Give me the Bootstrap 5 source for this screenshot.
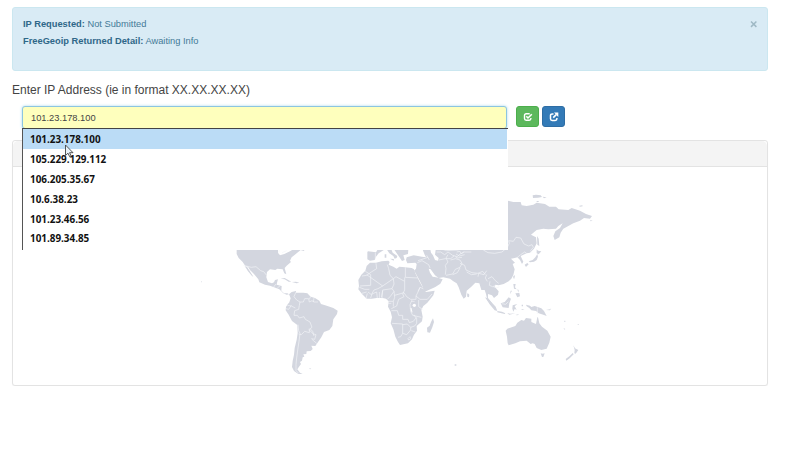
<!DOCTYPE html>
<html lang="en">
<head>
<meta charset="utf-8">
<title>IP Lookup</title>
<link href="https://cdn.jsdelivr.net/npm/bootstrap@5.3.0/dist/css/bootstrap.min.css" rel="stylesheet">
<style>
body{font-family:"Liberation Sans",Arial,sans-serif;font-size:9.3px;line-height:17px;color:#444;background:#fff;overflow:hidden}
.page{width:756px;margin:7px 0 0 12px}
.info-box{height:64px;padding:8px 10px;background:#d9ebf5;border-color:#cbe7f0;border-radius:3px;color:#447a97;margin:0}
.info-box strong{color:#2f6788}
.dismiss{color:#9fb9c5;width:9px;height:17px;margin-right:-2px}
.prompt-label{font-size:12px;line-height:16px;margin:11px 0 8px}
.entry{height:23px;padding:0 8px;font-size:9.3px;background:#feffbd;border-color:#8cc5e0;border-radius:3px;color:#444;box-shadow:0 0 3px #a9d6ec}
.entry:focus{background:#feffbd}
.field{width:485px;margin-left:10px}
.act{width:23px;height:21px;padding:0;border-radius:3px}
.act-ok{background:#5cb85c;border-color:#4cae4c;margin-left:9px}
.act-go{background:#337ab7;border-color:#2e6da4;margin-left:3px}
.suggest{left:0;top:22px;width:486px;height:122px;background:#fff;border-left:1px solid #555;border-top:1px solid #444;z-index:5;font:700 9.9px/20px "Open Sans","Noto Sans",sans-serif;color:#111}
.suggest li{padding-left:7px;height:19.9px}
.suggest li.hot{background:#bbdcf6;margin-right:1px}
.pointer{left:42px;top:38px;z-index:6}
.map-card{height:246px;margin-top:11px;border-color:#e3e3e3;border-radius:3px;box-shadow:0 1px 1px rgba(0,0,0,.04)}
.map-head{height:26px;background:#f4f4f4;border-color:#e3e3e3}
.land{fill:#d3d6df}
.edge{fill:none;stroke:#f4f5f8;stroke-width:1.9;stroke-linejoin:round}
</style>
<script src="https://cdn.jsdelivr.net/npm/bootstrap@5.3.0/dist/js/bootstrap.bundle.min.js"></script>
</head>
<body>
<main class="page">
  <div class="alert info-box d-flex justify-content-between">
    <div>
      <div><strong>IP Requested:</strong> Not Submitted</div>
      <div><strong>FreeGeoip Returned Detail:</strong> Awaiting Info</div>
    </div>
    <svg class="dismiss" viewBox="0 0 9 17"><path d="M1 5.500l5.400 5.400M6.400 5.500L1 10.900" stroke="currentColor" stroke-width="1.500"/></svg>
  </div>
  <p class="prompt-label">Enter IP Address (ie in format XX.XX.XX.XX)</p>
  <div class="d-flex align-items-start">
    <div class="field position-relative">
      <input class="form-control entry" value="101.23.178.100" aria-label="IP address">
      <ul class="suggest position-absolute list-unstyled m-0">
        <li class="hot">101.23.178.100</li><li>105.229.129.112</li><li>106.205.35.67</li><li>10.6.38.23</li><li>101.23.46.56</li><li>101.89.34.85</li>
      </ul>
      <svg class="pointer position-absolute" width="12" height="14" viewBox="0 0 12 14"><path d="M1.500 1v10.500l2.500-2.300 1.700 3.600 1.500-.8-1.600-3.300H9z" fill="#e9f3fb" stroke="#444" stroke-width=".9"/></svg>
    </div>
    <button class="btn act act-ok d-flex align-items-center justify-content-center" aria-label="Submit"><svg width="10" height="10" viewBox="0 0 10 10" fill="none" stroke="#fff"><path d="M6.700 1.700H3.200Q1.500 1.700 1.500 3.400v3.200Q1.500 8.300 3.200 8.300h3Q7.900 8.300 7.900 6.600V6" stroke-width="1.400"/><path d="M3.300 4.300l1.700 1.700 3.800-3.700" stroke-width="1.600"/></svg></button>
    <button class="btn act act-go d-flex align-items-center justify-content-center" aria-label="Open"><svg width="10" height="10" viewBox="0 0 10 10" fill="none" stroke="#fff"><path d="M4.500 1.900H3.200Q1.500 1.900 1.500 3.600v3.200Q1.500 8.500 3.200 8.500h3Q7.900 8.500 7.900 6.800V6" stroke-width="1.500"/><path d="M4.200 5.600l3-3" stroke-width="1.700"/><path d="M5 .6h4.300v4.300z" fill="#fff" stroke="none"/></svg></button>
  </div>
  <div class="card map-card">
    <div class="card-header map-head p-0"></div>
    <div class="card-body p-0">
      <svg class="d-block" width="754" height="217" viewBox="13 167 754 217">
        <!-- Americas -->
        <g transform="translate(190 240) scale(.33333)">
          <path class="land" d="M140 20H264V38l6 8 13-4 17-8 10-6 22 2-12 10-15 12-5 10 3 4-13 11-6 7 5 19-6-3-5-12-16-2-6 4-16-2-9 8-2 16 5 14 12 4 6-3 3-7 9-2-3 10-1 6 15 4-1 14 8 8h10l5 3-7 1-10-4-12-12-10-4-18-7-15-3-17-7-3-9-13-16-12-12-6-10-8-2-8-12-12-12-6-12zM164 78l8 4 18 28-4-2-12-14zM272 116l12-2 20 11-8 0-12-7zM306 126l12-1 10 3-8 2zM328 28l16 0-2 5-8-2zM33 124h2v3h-2zM356 386l8-1-3 3z"/>
          <path class="land" d="M297 163l8-7 13-3v5h22l12 2 10 10 13 4 13 8 5 10 17 5 20 7 13 8-2 10-11 16-3 20-9 12-16 6-8 16-14 20-4 6-12-1 4 10-6 6-12 1-1 8-9 1 3 7-5 2-2 10-6 4 3 6-7 10-4 6 8 10 8 4h-13l-13-9-6-12 2-18 4-19 2-20 6-25 3-20-1-24-16-12-10-19-9-13 1-10 4-7 6-7 4-12z"/>
          <path class="edge" d="M160 76l24 6 14-2 14 12 9 3 8 10M250 142l8-10M262 144l10-8M268 30l-2 10M276 38l14-6M318 156l-6 14 8 10 10 6-2 10M330 186l10 0 4-10 12 0 2 10 8-4 6 4 12 0M362 170l-4 8M372 174l-2 12M292 196l12 2 12 6M288 206l8 2 8-12M328 196l-2 12-12 4-2 14 10 0 6 8 14-4 4 8 14 8 6 16-8 6 0 10-14-4-10 10-8-2M356 268l14 14 8 2-4 14-10-2M366 298l14 12M324 254l2 18 4 8-3 24-3 20-4 30-2 20 0 18 8 8M360 266l8 8 4 14"/>
        </g>
        <!-- Africa and southern Europe -->
        <g transform="translate(340 240) scale(.33333)">
          <path class="land" d="M82 36l2-2 24 3 6-10h22l-20 13-8 10-4 10-14 2-8-4zM140 28h14l4 10 14 10-2 6-6 2-4-8-12-8zM150 56l12 1-1 5zM134 43h5v10h-5zM162 28h43l-1 14-14 4 4 14-8 3-8-12-10-14z"/>
          <path class="land" d="M90 68h18l17-4 20-2 4 4-3 8 14 6 10 6 8-6 17 2 20 2 7 4 4 12 12 24 10 18 10 14 26-4-4 14-18 22-12 10-6 12 4 20-2 14-16 14 1 14-9 12-6 14-12 12-24 5-6-9-8-16-6-22-8-18 4-18-4-17-8-15 2-16-8-8-10-2H110l-15 2H80L66 162 55 148l2-10-2-18 9-16 12-12 4-14zM279 235l3 11-5 16-7 16-8-1-1-14 8-6 4-11zM382 161l4 0 1 8-4 1z"/>
          <path class="edge" d="M108 70l2 16-16 10-14 10-14 2M76 94l16 10 0 32-32 2M80 104l48 34-14 8-12 4-8 14-10-8M128 138l32-22-10-10-4-20-4-12M160 116l8-6 26 14 0 26-6 12 4 8M196 82v30l38 2M194 124v-12M160 116l2 16-6 14-28 4-2 26M58 142l16 6 14 0M66 160l14-4M78 176l4-16M92 174l4-12 14-6 2 18M118 174l0-18M124 172l4-20M156 146l6 8-10 14-10 10M162 154l2 18-4 12-14 0M164 166l28-8 8 12 12 8 16 0 0-10 8-16 4-10 14 6M240 142l-6 12M228 168l12 10 22 0 14-16M236 180v20l14 10M216 180l-6 14 2 20 6 12 26 6M192 170l-16 8-6 20-16 8M160 184l0 16M154 212l18 0 4 14h12v12h16l4 10 12-4 8-10-6-10M156 250l32 2 0 28-6 10-8 2M188 254l14-2 10 10 12-4 6-8 0-18M188 280l12 4 12-14 0-8M214 272l12 4M204 296l6-6 2 6-6 4zM214 184l10 0M142 190h12M106 38l0 20M236 62l12 6 14-14M234 78l16-8 18 12M258 134l18-2 18-10M284 110l14 4"/>
          <ellipse cx="223" cy="196" rx="5" ry="5" fill="#fff"/><path d="M213 204l3 13" stroke="#fff" stroke-width="3"/>
        </g>
        <!-- Asia -->
        <g transform="translate(430 180) scale(.33333)">
          <path class="land" d="M200 62h34l16 4 22 0 3 10 15 2 20-4 10-6 25 4 13 8h20l8 8 29 2 10-6 25 8 18 10 18 6-6 8-18-2-12 8-20 8-15 8-15 8-8 12-4 14-14 8-4-12 6-14 14-10 8-14-13 8-7 8-23 2-15-2-20 4-17 14 15 8 2 18-8 16-12 12-10 2-18 8 8 17-4 7-6-12-8-8-8 2-11 2 12 12-7 4 6 16-4 17-6 11-8 8-15 8-15 4-10-2-2 6 12 14-2 10-12 10-6-8-12-4v12l12 16 2 8-8-6-8-12-4-18-4-12h-10l-6-20-12-2-12 12-14 12-2 18-7 6-7-12-8-22-6-12-10-6-10-8-20-4-14 2-11-8-13-18-6-2 4 12 8 12 10 2 8 2 12 4-7 13-15 10-28 13-6-2-6-16-10-20-10-18-4-6 6-6 2-14-4-4-24 2-4-10 2-8 21-6 25 4 12 2-4-8-8-20V190H200z"/>
          <path class="land" d="M308 46l10-2 14 2 4 5-12 2-15 1zM338 50l12 2-8 3zM448 77l9-1 1 3-9 1zM320 63h6v3h-6zM480 120l8 2-6 2zM321 168l5 8 2 22-6-4zM320 208l4 4 10 2-8 9-6-3zM322 222l2 8-4 10-8 5-12 2-4-3 12-4 8-8zM284 254l8-5 4 4-8 8zM250 288l5-2-2 10-3-1z"/>
          <path d="M0 204l17 6-2 14 11 10-2 8-9-2-6-14-6-8z" fill="#fff"/>
          <path class="edge" d="M160 210l14 8 20 2 22-4 16-14 6-12-2-8 14 2 8-12 14 2 10 18 14 6 10-4 4 8-8 10 4 6M290 220l-6-4-12 8-10 8M20 216l12 0 12 8 10-8 14 10 14 4 8-8 14-6 20 0M38 208l12 4 36-2M54 224l-6 10 6 12-8 10 2 10-2 18M26 240l20-4 16 0 10-8M62 240l14-4 14 4 6 10-6 12-14 6-8 14-20 4M68 284l14-6 8-14M76 230l6 4 14-2M90 250l14 6 4 14 18 8 18 2 14-6 8 10M110 276l14 8 16-2M144 290l2-10 16 4 8-12M170 284l-4 10 6 10M174 296l12-6 10 12 10 8M180 304l-2 12 10 4 10-4M190 320l10 4 8-4M-38 248l14-6 20 12 4 10M-10 226l8 14M-36 242l30-10M80 216l10-2 4 8 8-8M78 222l10 6 16-4"/>
        </g>
        <!-- Oceania and the Malay archipelago -->
        <g transform="translate(430 260) scale(.33333)">
          <path class="land" d="M227 212l5-6 24-8 6-10 12-8 8 2 6-8 16 2v10l14 6 4-20h2l4 18 8 10 16 12 10 18-4 18-8 18-16 4-14-6-6-12-6-2-6 2-12-10-20 2-14 6-20 6-3-6-2-20zM332 280l6 1 6-1-4 11h-4zM430 256l5 9 10 5-8 11-4-1 1-10zM428 279l3 4-12 12-10 7-2-5 11-8z"/>
          <path class="land" d="M112 100l6 4-1 8-5-2zM165 112l10 4 22 24 5 13-8-2-14-17zM202 153l14 2 10 5-2 2-22-5zM212 130l12-4 12-14 7 4-5 14-2 14-18-2zM248 136l14-4-8 7 6 10-6-2-4 8-3-9zM232 160l10 1 14-1-18 4zM256 165l12-3-6 4zM250 72l7 0-2 10 5 6-8-2zM256 100l12-1 2 10-8 3zM262 88l4 2-1 8zM242 92l4 0-6 11zM211 64l6 1-3 5zM288 134l12 3 4 4 10-3 20 7 8 8 8 15-10-4-14-4-8-7-14-2-6-7-8-5zM348 150l12-2 4-3-4 6zM368 154l6 2zM403 182h3v4h-3zM400 204l6 3-2 2zM442 192l5 0-2 3zM275 134h4v5h-4zM274 147l10 1-8 2zM74 313h5v4h-5z"/>
          <path class="edge" d="M322 142l0 20M215 131l12 2 8-8"/>
        </g>
      </svg>
    </div>
  </div>
</main>
</body>
</html>
